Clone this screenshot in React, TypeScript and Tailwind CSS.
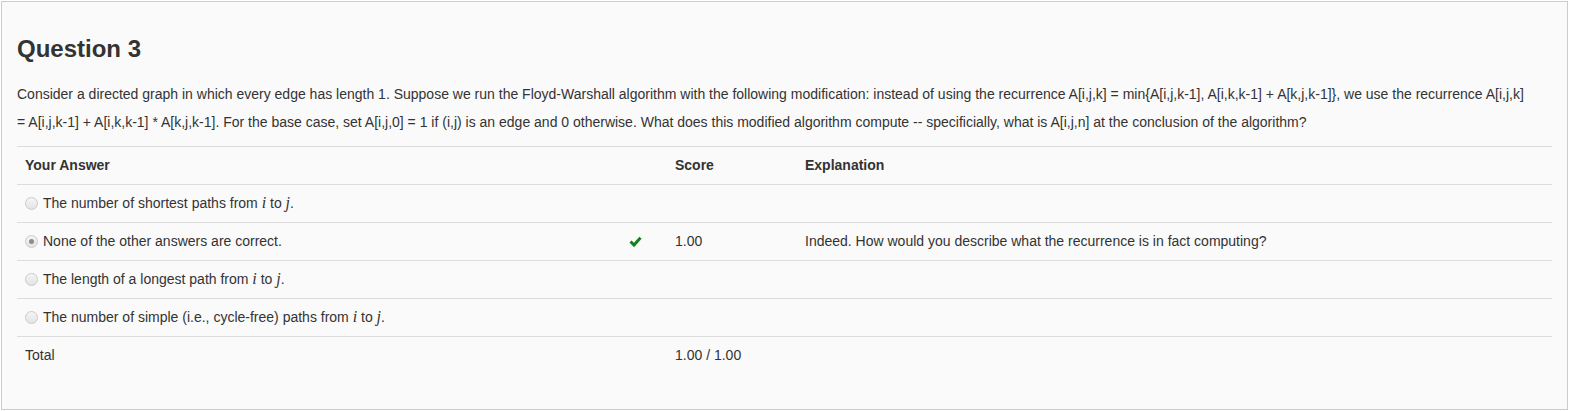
const row = "grid grid-cols-[604px_46px_130px_1fr] border-t border-[#dddddd]"
const cell = "px-2 pt-2 pb-[9px] leading-5"

const line1 =
  "Consider a directed graph in which every edge has length 1. Suppose we run the Floyd-Warshall algorithm with the following modification: instead of using the recurrence A[i,j,k] = min{A[i,j,k-1], A[i,k,k-1] + A[k,j,k-1]}, we use the recurrence A[i,j,k]"
const line2 =
  "= A[i,j,k-1] + A[i,k,k-1] * A[k,j,k-1]. For the base case, set A[i,j,0] = 1 if (i,j) is an edge and 0 otherwise. What does this modified algorithm compute -- specificially, what is A[i,j,n] at the conclusion of the algorithm?"

function Radio({ checked = false }: { checked?: boolean }) {
  return (
    <span className="inline-flex h-[13px] w-[13px] shrink-0 items-center justify-center rounded-full border border-[#cacaca] bg-gradient-to-b from-[#f4f4f4] to-[#e4e4e4]">
      {checked && <span className="h-[5px] w-[5px] rounded-full bg-[#8d8d8d]" />}
    </span>
  )
}

function V({ children }: { children: string }) {
  return (
    <span className="font-['Liberation_Serif',serif] text-[16px] italic">{children}</span>
  )
}

function Check() {
  return (
    <svg width="13" height="11" viewBox="0 0 13 11" className="mt-[5px]">
      <polyline
        points="1.5,5.5 5,9 11.5,1.8"
        fill="none"
        stroke="#12801a"
        strokeWidth="3"
        strokeLinejoin="miter"
      />
    </svg>
  )
}

const answers = [
  { text: "The number of shortest paths from ", math: true },
  { text: "None of the other answers are correct.", chosen: true },
  { text: "The length of a longest path from ", math: true },
  { text: "The number of simple (i.e., cycle-free) paths from ", math: true },
]

export default function App() {
  return (
    <div className="bg-white p-px font-['Liberation_Sans',Arial,sans-serif] text-[14px] text-[#333333]">
      <div className="h-[409px] border border-[#cccccc] bg-[#fafafa] px-[15px] pt-[33px]">
        <h3 className="text-[24px] font-bold leading-[28px]">Question 3</h3>
        <p className="mt-[17px] mb-[10px] leading-[28px]">
          {line1}
          <br />
          {line2}
        </p>

        <div>
          <div className={row + " font-bold"}>
            <div className={cell}>Your Answer</div>
            <div className={cell}></div>
            <div className={cell}>Score</div>
            <div className={cell}>Explanation</div>
          </div>

          {answers.map((a, i) => (
            <div key={i} className={row}>
              <div className={cell + " flex items-center gap-[5px]"}>
                <Radio checked={a.chosen} />
                <span>
                  {a.text}
                  {a.math && (
                    <>
                      <V>i</V> to <V>j</V>.
                    </>
                  )}
                </span>
              </div>
              <div className={cell + " pl-2"}>{a.chosen && <Check />}</div>
              <div className={cell}>{a.chosen ? "1.00" : ""}</div>
              <div className={cell}>
                {a.chosen ? "Indeed. How would you describe what the recurrence is in fact computing?" : ""}
              </div>
            </div>
          ))}

          <div className={row}>
            <div className={cell}>Total</div>
            <div className={cell}></div>
            <div className={cell}>1.00 / 1.00</div>
            <div className={cell}></div>
          </div>
        </div>
      </div>
    </div>
  )
}
